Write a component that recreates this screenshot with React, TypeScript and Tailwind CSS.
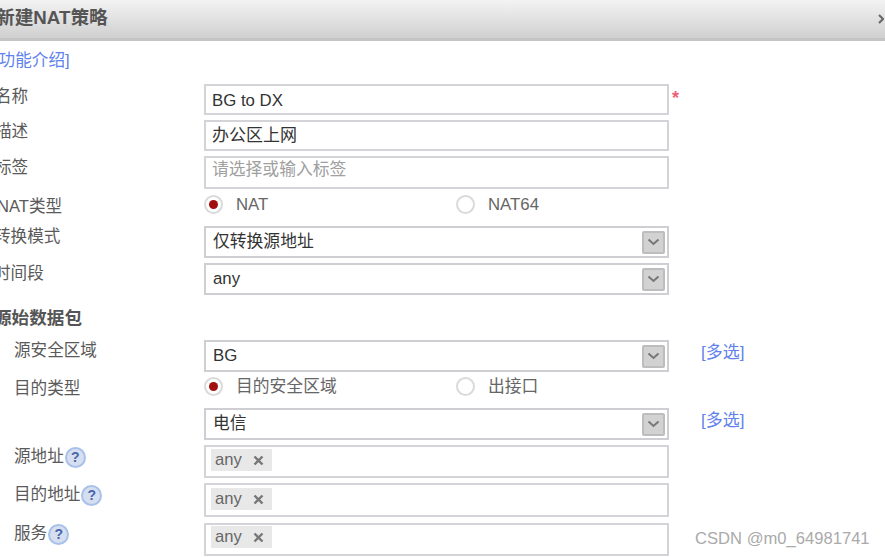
import React from "react";

const font = { fontFamily: '"Liberation Sans", "Noto Sans CJK SC", sans-serif' };

function Chevron() {
  return (
    <div className="flex h-[23px] w-[23px] items-center justify-center rounded-[2px] border-2 border-[#bdbdbd] bg-[#d2d2d2]">
      <svg width="13" height="8" viewBox="0 0 13 8" fill="none">
        <path d="M1.5 1.5 L6.5 6 L11.5 1.5" stroke="#777777" strokeWidth="2" />
      </svg>
    </div>
  );
}

function Help() {
  return (
    <span className="ml-[1px] flex h-[21px] w-[21px] items-center justify-center rounded-full border-2 border-[#a9c0ea] bg-[#d5dfef] text-[14px] font-bold text-[#4a64ad]">
      ?
    </span>
  );
}

function Label({ children }: { children: React.ReactNode }) {
  return <div className="flex h-[20px] translate-y-[1px] items-center whitespace-nowrap text-[16.6px] leading-[20px] text-[#5a5a5a]">{children}</div>;
}

function Box({ h, children }: { h: string; children?: React.ReactNode }) {
  return <div className={`flex w-[465px] items-start border-2 border-[#d4d4d8] bg-white ${h}`}>{children}</div>;
}

function Select({ text }: { text: string }) {
  return (
    <div className="flex h-full w-[465px] items-center justify-between border-2 border-[#cfcfd3] bg-white pl-[7px] pr-[2px] text-[16.8px] text-[#333333]">
      <span className="mt-[-1px]">{text}</span>
      <Chevron />
    </div>
  );
}

function Tag() {
  return (
    <div className="ml-[5px] flex h-[22px] w-[61px] items-center bg-[#e8e8e8] pl-[4px] text-[16.6px] text-[#666666]">
      <span>any</span>
      <svg className="ml-[11px]" width="11" height="11" viewBox="0 0 11 11">
        <path d="M1.5 1.5 L9.5 9.5 M9.5 1.5 L1.5 9.5" stroke="#777777" strokeWidth="2.4" />
      </svg>
    </div>
  );
}

function Radio({ on, text, cls }: { on?: boolean; text: string; cls: string }) {
  return (
    <div className={`flex items-center ${cls}`}>
      <span className="flex h-[19px] w-[19px] items-center justify-center rounded-full border-2 border-[#dadada] bg-white">
        {on && <span className="h-[9px] w-[9px] rounded-full bg-[#a30f0f]" />}
      </span>
      <span className="ml-[13px] translate-y-[1px] whitespace-nowrap text-[16.8px] text-[#666666]">{text}</span>
    </div>
  );
}

function More() {
  return <span className="ml-[32px] mt-[-6px] whitespace-nowrap text-[17px] text-[#5f82ec]">[多选]</span>;
}

export default function App() {
  return (
    <div className="relative flex h-[557px] w-[885px] flex-col overflow-hidden bg-white" style={font}>
      <div className="flex h-[41px] shrink-0 items-center justify-between border-b-[3px] border-[#c4c4c4] bg-gradient-to-b from-[#f3f3f3] to-[#d0d0d0] pb-[1px]">
        <span className="ml-[-4px] text-[18.7px] font-bold text-[#555555]">新建NAT策略</span>
        <svg className="mr-[1px]" width="6" height="10" viewBox="0 0 6 10" fill="none">
          <path d="M1 1 L5 5 L1 9" stroke="#666666" strokeWidth="2" />
        </svg>
      </div>

      <div className="ml-[-6px] mt-[10px] h-[19px] text-[16.6px] leading-[20px] text-[#5f82ec]">[功能介绍]</div>

      <div className="mt-[14px] flex h-[31px]">
        <div className="ml-[-5px] w-[209px] pt-[2px]"><Label>名称</Label></div>
        <Box h="h-[31px]"><span className="pl-[6px] pt-[2px] text-[16.8px] text-[#333333]">BG to DX</span></Box>
        <span className="ml-[3px] mt-[4px] text-[18px] font-bold leading-[20px] text-[#f0607a]">*</span>
      </div>

      <div className="mt-[5px] flex h-[31px]">
        <div className="ml-[-5px] w-[209px] pt-[1px]"><Label>描述</Label></div>
        <Box h="h-[31px]"><span className="pl-[6px] pt-[1px] text-[17px] text-[#333333]">办公区上网</span></Box>
      </div>

      <div className="mt-[5px] flex h-[33px]">
        <div className="ml-[-5px] w-[209px] pt-[1px]"><Label>标签</Label></div>
        <div className="flex h-[33px] w-[465px] items-start border-2 border-[#d4d4d8] bg-white pl-[6px] pt-[1px] text-[16.8px] leading-[22px] text-[#a0a0a0]">请选择或输入标签</div>
      </div>

      <div className="mt-[5px] flex h-[20px] items-center">
        <div className="ml-[-3px] w-[207px] pt-[4px]"><Label>NAT类型</Label></div>
        <Radio on text="NAT" cls="w-[252px]" />
        <Radio text="NAT64" cls="" />
      </div>

      <div className="mt-[12px] flex h-[32px]">
        <div className="ml-[-6px] w-[210px]"><Label>转换模式</Label></div>
        <Select text="仅转换源地址" />
      </div>

      <div className="mt-[5px] flex h-[32px]">
        <div className="ml-[-6px] w-[210px]"><Label>时间段</Label></div>
        <Select text="any" />
      </div>

      <div className="ml-[-6px] mt-[13px] h-[20px] whitespace-nowrap text-[17.6px] font-bold leading-[20px] text-[#555555]">源始数据包</div>

      <div className="mt-[12px] flex h-[32px] items-center">
        <div className="h-[32px] w-[204px] pl-[14px]"><Label>源安全区域</Label></div>
        <Select text="BG" />
        <More />
      </div>

      <div className="mt-[4px] flex h-[20px] items-center">
        <div className="w-[204px] pl-[14px] pt-[4px]"><Label>目的类型</Label></div>
        <Radio on text="目的安全区域" cls="w-[252px]" />
        <Radio text="出接口" cls="" />
      </div>

      <div className="mt-[12px] flex h-[32px] items-center">
        <div className="w-[204px]" />
        <Select text="电信" />
        <More />
      </div>

      <div className="mt-[5px] flex h-[33px]">
        <div className="w-[204px] pl-[14px] pt-[1px]"><Label>源地址<Help /></Label></div>
        <Box h="h-[33px] pt-[2px]"><Tag /></Box>
      </div>

      <div className="mt-[5px] flex h-[34px]">
        <div className="w-[204px] pl-[14px] pt-[1px]"><Label>目的地址<Help /></Label></div>
        <Box h="h-[34px] pt-[3px]"><Tag /></Box>
      </div>

      <div className="mt-[6px] flex h-[33px]">
        <div className="w-[204px] pl-[14px]"><Label>服务<Help /></Label></div>
        <Box h="h-[33px] pt-[1px]"><Tag /></Box>
      </div>

      <div className="absolute left-[695px] top-[530px] whitespace-nowrap text-[16.6px] leading-[18px] text-[#aaaaaa]">CSDN @m0_64981741</div>
    </div>
  );
}
